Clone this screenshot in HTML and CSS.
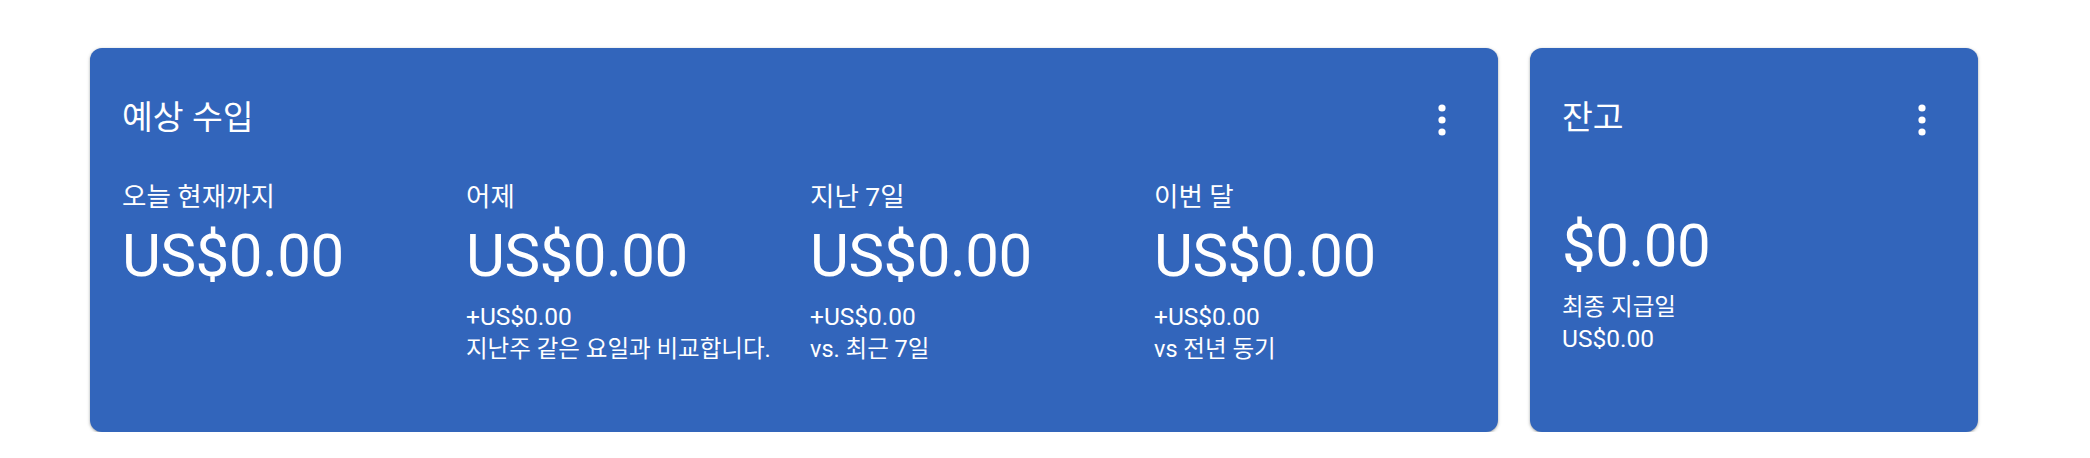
FILE: index.html
```html
<!DOCTYPE html>
<html lang="ko">
<head>
<meta charset="utf-8">
<title>수입</title>
<link rel="stylesheet" href="styles.css">
</head>
<body>
<main class="cards">
  <section class="card card-earnings">
    <header class="card-header">
      <h2 class="card-title">예상 수입</h2>
      <button class="kebab" aria-label="더보기">
        <svg viewBox="0 0 24 24" width="48" height="48"><circle cx="12" cy="6" r="1.8"/><circle cx="12" cy="12" r="1.8"/><circle cx="12" cy="18" r="1.8"/></svg>
      </button>
    </header>
    <div class="stats">
      <div class="stat">
        <div class="stat-label">오늘 현재까지</div>
        <div class="stat-amount">US$0.00</div>
      </div>
      <div class="stat">
        <div class="stat-label">어제</div>
        <div class="stat-amount">US$0.00</div>
        <div class="stat-sub">+US$0.00</div>
        <div class="stat-sub stat-note">지난주 같은 요일과 비교합니다.</div>
      </div>
      <div class="stat">
        <div class="stat-label">지난 7일</div>
        <div class="stat-amount">US$0.00</div>
        <div class="stat-sub">+US$0.00</div>
        <div class="stat-sub stat-note">vs. 최근 7일</div>
      </div>
      <div class="stat">
        <div class="stat-label">이번 달</div>
        <div class="stat-amount">US$0.00</div>
        <div class="stat-sub">+US$0.00</div>
        <div class="stat-sub stat-note">vs 전년 동기</div>
      </div>
    </div>
  </section>
  <section class="card card-balance">
    <header class="card-header">
      <h2 class="card-title">잔고</h2>
      <button class="kebab" aria-label="더보기">
        <svg viewBox="0 0 24 24" width="48" height="48"><circle cx="12" cy="6" r="1.8"/><circle cx="12" cy="12" r="1.8"/><circle cx="12" cy="18" r="1.8"/></svg>
      </button>
    </header>
    <div class="balance-amount stat-amount">$0.00</div>
    <div class="stat-sub stat-note">최종 지급일</div>
    <div class="stat-sub">US$0.00</div>
  </section>
</main>
</body>
</html>
```

FILE: styles.css
```css
* { box-sizing: border-box; }

html, body {
  margin: 0;
  padding: 0;
  background: #ffffff;
}

body {
  font-family: Roboto, "Noto Sans CJK KR", sans-serif;
  color: #ffffff;
}

.cards {
  display: flex;
  gap: 32px;
  padding: 48px 0 0 90px;
}

.card {
  background: #3265bb;
  border-radius: 12px;
  height: 384px;
  padding: 48px 32px 0 32px;
  box-shadow: 0 1px 2px 0 rgba(60, 64, 67, 0.3), 0 1px 3px 1px rgba(60, 64, 67, 0.15);
}

.card-earnings { width: 1408px; }
.card-balance { width: 448px; }

.card-header {
  display: flex;
  justify-content: space-between;
  align-items: flex-start;
  height: 48px;
}

.card-title {
  margin: 2px 0 0 0;
  font-size: 33.5px;
  line-height: 40px;
  font-weight: 400;
}

.kebab {
  width: 48px;
  height: 48px;
  padding: 0;
  border: 0;
  background: transparent;
  display: flex;
  align-items: center;
  justify-content: center;
}

.kebab svg { fill: #ffffff; display: block; }

.stats {
  display: grid;
  grid-template-columns: repeat(4, 344px);
  margin-top: 37px;
}

.stat-label {
  font-size: 26.5px;
  line-height: 32px;
}

.stat-amount {
  font-size: 60px;
  line-height: 64px;
  letter-spacing: -0.5px;
  margin-top: 11px;
}

.stat-sub {
  font-size: 24.5px;
  line-height: 32px;
}

.stat-note { font-size: 23.5px; }

.stat-amount + .stat-sub { margin-top: 13px; }

.balance-amount { margin-top: 70px; }
```
